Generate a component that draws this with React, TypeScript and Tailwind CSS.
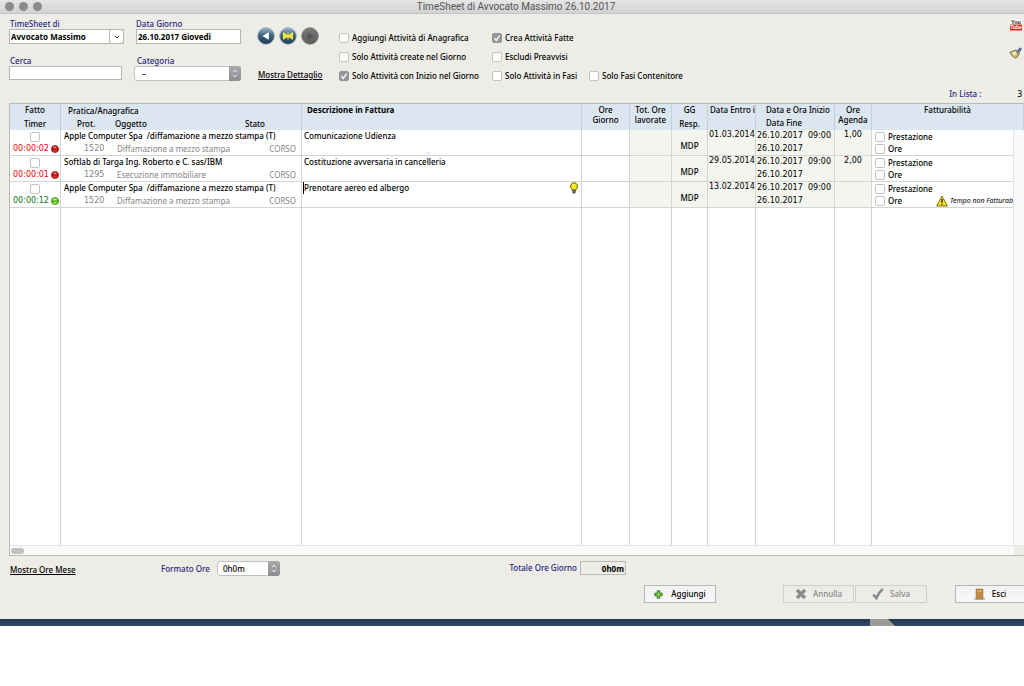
import { useState } from 'react';
import type { ReactNode } from 'react';

type Row = {
  timer: string;
  running: boolean;
  practice: string;
  prot: string;
  subject: string;
  description: string;
  due: string;
  hours: string;
  tip?: boolean;
  warning?: string;
};

const rows: Row[] = [
  {
    timer: '00:00:02',
    running: false,
    practice: 'Apple Computer Spa  /diffamazione a mezzo stampa (T)',
    prot: '1520',
    subject: 'Diffamazione a mezzo stampa',
    description: 'Comunicazione Udienza',
    due: '01.03.2014',
    hours: '1,00',
  },
  {
    timer: '00:00:01',
    running: false,
    practice: 'Softlab di Targa Ing. Roberto e C. sas/IBM',
    prot: '1295',
    subject: 'Esecuzione immobiliare',
    description: 'Costituzione avversaria in cancelleria',
    due: '29.05.2014',
    hours: '2,00',
  },
  {
    timer: '00:00:12',
    running: true,
    practice: 'Apple Computer Spa  /diffamazione a mezzo stampa (T)',
    prot: '1520',
    subject: 'Diffamazione a mezzo stampa',
    description: 'Prenotare aereo ed albergo',
    due: '13.02.2014',
    hours: '',
    tip: true,
    warning: 'Tempo non Fatturab',
  },
];

function Tick({ label, checked = false, hideLabel = false }: { label: string; checked?: boolean; hideLabel?: boolean }) {
  const [on, setOn] = useState(checked);
  return (
    <label className="inline-flex items-center gap-[3px] whitespace-nowrap">
      <span className="grid size-[10px] shrink-0">
        <input
          type="checkbox"
          aria-label={hideLabel ? label : undefined}
          checked={on}
          onChange={(e) => setOn(e.target.checked)}
          className="col-start-1 row-start-1 size-[10px] appearance-none rounded-[2px] border border-[#c2c2c2] bg-white checked:border-[#929295] checked:bg-[#98989b]"
        />
        {on && (
          <svg viewBox="0 0 10 10" className="pointer-events-none col-start-1 row-start-1 size-[10px]" fill="none" stroke="#fff" strokeWidth="1.3">
            <path d="M2.4 5.3 4.3 7.4 7.6 2.6" />
          </svg>
        )}
      </span>
      {!hideLabel && <span>{label}</span>}
    </label>
  );
}

function Stepper() {
  return (
    <span className="pointer-events-none absolute inset-y-0 right-0 grid w-[12px] place-items-center rounded-r-[3px] bg-linear-to-b from-[#a9a9ad] to-[#8c8c91]">
      <svg viewBox="0 0 8 12" className="h-[11px] w-[8px]" fill="none" stroke="#fff" strokeWidth="1">
        <path d="M1.8 4.6 4 2.2l2.2 2.4M1.8 7.4 4 9.8l2.2-2.4" />
      </svg>
    </span>
  );
}

function NavButton({ label, kind }: { label: string; kind: 'prev' | 'today' | 'next' }) {
  const off = kind === 'next';
  return (
    <button type="button" aria-label={label} disabled={off}>
      <svg viewBox="0 0 18 18" className="size-[18px]">
        <defs>
          <linearGradient id={`ball-${kind}`} x1="0" y1="0" x2="0" y2="1">
            <stop offset="0" stopColor={off ? '#7c7c7c' : '#9fb9cf'} />
            <stop offset="0.45" stopColor={off ? '#6a6a6a' : '#3f6480'} />
            <stop offset="1" stopColor={off ? '#5c5c5c' : '#163a52'} />
          </linearGradient>
        </defs>
        <circle cx="9" cy="9" r="8.3" fill={`url(#ball-${kind})`} stroke={off ? '#777' : '#8fa3b3'} strokeWidth="0.8" />
        {kind === 'prev' && <path d="M11.8 5.2v7.6L5.4 9z" fill="#fff" />}
        {kind === 'today' && (
          <path d="M4 5.4h1L8.400 8V5.400h1.200V8L13 5.400h1v7.200h-1L9.600 10v2.600H8.400V10L5 12.600H4z" fill="#f3e53c" />
        )}
        {kind === 'next' && <path d="M6.8 5.4v7.2l5.600-3.600z" fill="#525252" />}
      </svg>
    </button>
  );
}

function YouTubeIcon() {
  return (
    <svg viewBox="0 0 12 12" className="h-[12px] w-[12px]">
      <rect x="0.5" width="11" height="5.5" fill="#fff" />
      <text x="6" y="4.8" textAnchor="middle" fontSize="5.5" fontWeight="bold" fontFamily="Liberation Sans, sans-serif" fill="#222">
        You
      </text>
      <rect y="5.5" width="12" height="6" rx="0.6" fill="#d9281e" />
      <text x="6" y="10.4" textAnchor="middle" fontSize="5" fontWeight="bold" fontFamily="Liberation Sans, sans-serif" fill="#fff">
        Tube
      </text>
    </svg>
  );
}

function BroomIcon() {
  return (
    <svg viewBox="0 0 13 12" className="h-[12px] w-[13px]">
      <path d="M8.2 4.4 10.6 1l1.6.2-.2 1.7-2.4 3z" fill="#5a66a0" stroke="#3f4674" strokeWidth="0.6" />
      <path d="M1 5.2 7.3 3l3 3.2-1.5 3.4-2.8 1.6C3.8 9.8 2.2 8 1 5.2z" fill="#d3bd62" stroke="#5d5a48" strokeWidth="0.8" />
      <path d="M3 5.6 6.8 4.6 7.6 6.4 5.5 8.6z" fill="#f7efb8" />
      <path d="M7.3 3l3 3.2-.7 1.5L6.2 3.500z" fill="#7b7c82" />
    </svg>
  );
}

function BulbIcon() {
  return (
    <svg viewBox="0 0 10 12" className="h-[12px] w-[10px] shrink-0" aria-hidden="true">
      <circle cx="5" cy="4.5" r="4.6" fill="#fdf7a0" />
      <path d="M5 .8a3.4 3.4 0 0 1 2.200 6L6.600 8H3.400l-.6-1.200A3.400 3.400 0 0 1 5 .8z" fill="#fbee15" stroke="#3c3a10" strokeWidth="0.8" />
      <path d="M3.600 8.200h2.800v2L5.700 11.300H4.300l-.7-1.100z" fill="#777" stroke="#333" strokeWidth="0.6" />
      <path d="M3.600 2.600h1.400v2H3.600z" fill="#fffbc0" />
    </svg>
  );
}

function WarningIcon() {
  return (
    <svg viewBox="0 0 12 12" className="size-[12px] shrink-0" aria-hidden="true">
      <path d="M6 1 11.300 11H.7z" fill="#fce51d" stroke="#6e6108" strokeWidth="0.9" strokeLinejoin="round" />
      <path d="M6 4v3.800M6 8.700v1.300" stroke="#111" strokeWidth="1.3" />
    </svg>
  );
}

function Lamp({ on }: { on: boolean }) {
  return (
    <svg viewBox="0 0 8 8" className="size-[8px] shrink-0" aria-hidden="true">
      <circle cx="4" cy="4" r="3.600" fill={on ? '#58b414' : '#c01010'} stroke={on ? '#3d7a10' : '#7e1010'} strokeWidth="0.6" />
      <ellipse cx="4" cy="2.400" rx="1.800" ry="0.900" fill={on ? '#d5f5a8' : '#e88080'} />
      <ellipse cx="4" cy="5.800" rx="2" ry="1" fill={on ? '#9be83a' : '#ea2a2a'} />
    </svg>
  );
}

function FootButton({ children, disabled = false, className = '' }: { children: ReactNode; disabled?: boolean; className?: string }) {
  return (
    <button
      type="button"
      disabled={disabled}
      className={`flex h-[18px] items-center justify-center border border-[#b4b8bb] bg-linear-to-b from-[#f1f1f2] to-[#f8f8f8] font-medium disabled:border-[#cfcfcb] disabled:from-[#ebeae6] disabled:to-[#efeeea] disabled:text-[#888] ${className}`}
    >
      {children}
    </button>
  );
}

const th = 'h-[26px] border-r border-[#c6ced6] p-0 align-top font-medium';
const td = 'h-[26px] border-r border-b border-[#d4d4d4] p-0 align-top';
const tinted = 'bg-[#f4f5ef]';
const digits = "font-['DejaVu_Sans',sans-serif]";

export default function App() {
  return (
    <div className="min-h-screen overflow-x-hidden bg-white font-['Noto_Sans','Open_Sans',sans-serif] text-[8px] leading-[12px] text-black">
      <header className="flex h-[14px] items-center border-b border-[#c4c4c4] bg-linear-to-b from-[#e6e6e6] to-[#d2d2d2] px-[5px]">
        <div className="flex flex-1 gap-[5px]">
          <span className="size-[9px] rounded-full bg-[#8b8b8b]" />
          <span className="size-[9px] rounded-full bg-[#8b8b8b]" />
          <span className="size-[9px] rounded-full bg-[#8b8b8b]" />
        </div>
        <h1 className="pl-[8px] font-['Roboto',sans-serif] text-[10px] font-normal text-[#555]">TimeSheet di Avvocato Massimo 26.10.2017</h1>
        <div className="flex-1" />
      </header>

      <main className="bg-[#edece6] pb-[16px]">
        <section className="flex h-[89px] items-start pl-[9px]">
          <div className="grid grid-cols-[115px_107px] gap-x-[10px] gap-y-[12px] pt-[5px]">
            <div>
              <label htmlFor="owner" className="block pl-px leading-[10px] font-medium text-[#26267f]">TimeSheet di</label>
              <div className="relative">
                <select id="owner" className="block h-[15px] w-full appearance-none border border-[#b5b5b5] bg-white pl-px font-bold">
                  <option>Avvocato Massimo</option>
                </select>
                <span className="pointer-events-none absolute inset-y-0 right-0 grid w-[15px] place-items-center rounded-[3px] border border-[#b5b5b5] bg-white">
                  <svg viewBox="0 0 8 6" className="h-[6px] w-[8px]" fill="none" stroke="#333" strokeWidth="1">
                    <path d="M1.800 1.800 4 4l2.200-2.200" />
                  </svg>
                </span>
              </div>
            </div>
            <div className="pl-[2px]">
              <label htmlFor="day" className="block leading-[10px] font-medium text-[#26267f]">Data Giorno</label>
              <input id="day" defaultValue="26.10.2017 Giovedì" className="block h-[15px] w-full border border-[#b5b5b5] bg-white px-px font-bold" />
            </div>
            <div className="pr-[2px]">
              <label htmlFor="search" className="block pl-px leading-[10px] font-medium text-[#26267f]">Cerca</label>
              <input id="search" className="block h-[14px] w-full border border-[#b5b5b5] bg-white px-px" />
            </div>
            <div>
              <label htmlFor="category" className="block pl-[3px] leading-[10px] font-medium text-[#26267f]">Categoria</label>
              <div className="relative">
                <select id="category" className="block h-[15px] w-full appearance-none rounded-[3px] border border-[#c2c2c2] bg-white pl-[7px]">
                  <option>–</option>
                </select>
                <Stepper />
              </div>
            </div>
          </div>

          <div className="ml-[16px] flex w-[67px] flex-col pt-[13px]">
            <div className="flex gap-[4px]">
              <NavButton label="Giorno precedente" kind="prev" />
              <NavButton label="Oggi" kind="today" />
              <NavButton label="Giorno successivo" kind="next" />
            </div>
            <a href="#dettaglio" className="mt-[24px] pl-px font-medium whitespace-nowrap underline">Mostra Dettaglio</a>
          </div>

          <div className="ml-[15px] grid grid-cols-[153px_97px_auto] gap-y-[7px] pt-[18px] font-medium">
            <Tick label="Aggiungi Attività di Anagrafica" />
            <Tick label="Crea Attività Fatte" checked />
            <span />
            <Tick label="Solo Attività create nel Giorno" />
            <Tick label="Escludi Preavvisi" />
            <span />
            <Tick label="Solo Attività con Inizio nel Giorno" checked />
            <Tick label="Solo Attività in Fasi" />
            <Tick label="Solo Fasi Contenitore" />
          </div>

          <div className="ml-auto flex flex-col items-end pt-[5px] pr-[2px]">
            <button type="button" aria-label="YouTube"><YouTubeIcon /></button>
            <button type="button" aria-label="Pulisci" className="mt-[16px]"><BroomIcon /></button>
            <p className="mt-[29px] flex gap-[36px] font-medium text-[#26267f]">
              In Lista : <span className="text-black">3</span>
            </p>
          </div>
        </section>

        <section className="ml-[9px] border-y border-l border-[#b9b9b9] bg-white">
          <table className="w-full table-fixed border-separate border-spacing-0">
            <colgroup>
              <col className="w-[51px]" />
              <col className="w-[241px]" />
              <col />
              <col className="w-[48px]" />
              <col className="w-[42px]" />
              <col className="w-[36px]" />
              <col className="w-[48px]" />
              <col className="w-[79px]" />
              <col className="w-[37px]" />
              <col className="w-[142px]" />
              <col className="w-[10px]" />
            </colgroup>
            <thead className="bg-[#dce6f0]">
              <tr>
                <th className={th}>
                  <div>Fatto</div>
                  <div className="pt-[2px]">Timer</div>
                </th>
                <th className={th}>
                  <div className="pt-px pl-[7px] text-left">Pratica/Anagrafica</div>
                  <div className="grid grid-cols-[38px_130px_auto] pt-px pl-[16px] text-left">
                    <span>Prot.</span>
                    <span>Oggetto</span>
                    <span>Stato</span>
                  </div>
                </th>
                <th className={`${th} text-left`}>
                  <div className="pl-[5px] font-bold">Descrizione in Fattura</div>
                </th>
                <th className={th}><div className="pt-px leading-[10px]">Ore<br />Giorno</div></th>
                <th className={th}><div className="pt-px leading-[10px]">Tot. Ore<br />lavorate</div></th>
                <th className={th}>
                  <div>GG</div>
                  <div className="pt-[2px]">Resp.</div>
                </th>
                <th className={th}><div className="overflow-hidden pl-[2px] text-left whitespace-nowrap">Data Entro il</div></th>
                <th className={`${th} text-left`}>
                  <div className="pl-[10px] whitespace-nowrap">Data e Ora Inizio</div>
                  <div className="pt-px pl-[10px]">Data Fine</div>
                </th>
                <th className={th}><div className="pt-px leading-[10px]">Ore<br />Agenda</div></th>
                <th colSpan={2} className={th}>Fatturabilità</th>
              </tr>
            </thead>
            <tbody>
              {rows.map((r, i) => (
                <tr key={i}>
                  <td className={td}>
                    <div className="flex h-[13px] items-center justify-center">
                      <Tick label={`Fatto ${i + 1}`} hideLabel />
                    </div>
                    <div className={`flex h-[11px] items-center justify-between pr-px pl-[3px] leading-[11px] ${digits} ${r.running ? 'text-[#0b7a24]' : 'text-[#f4000c]'}`}>
                      {r.timer}
                      <Lamp on={r.running} />
                    </div>
                  </td>
                  <td className={td}>
                    <div className="pl-[3px] font-medium whitespace-pre">{r.practice}</div>
                    <div className="flex pt-px pr-[5px] pl-[23px] text-[#858585]">
                      <span className={`w-[33px] ${digits}`}>{r.prot}</span>
                      <span>{r.subject}</span>
                      <span className="ml-auto">CORSO</span>
                    </div>
                  </td>
                  <td className={td}>
                    <div className="flex items-center justify-between pr-[2px] pl-px font-medium">
                      <span className={r.tip ? 'border-l border-black' : 'pl-px'}>{r.description}</span>
                      {r.tip && <BulbIcon />}
                    </div>
                  </td>
                  <td className={td} />
                  <td className={`${td} ${tinted}`} />
                  <td className={`${td} ${tinted}`}><div className="pt-[10px] text-center font-medium">MDP</div></td>
                  <td className={`${td} ${tinted}`}><div className={`pl-px leading-[10px] whitespace-nowrap ${digits}`}>{r.due}</div></td>
                  <td className={`${td} ${tinted}`}>
                    <div className={`grid grid-cols-[51px_auto] gap-y-px pl-px ${digits}`}>
                      <span>26.10.2017</span>
                      <span>09:00</span>
                      <span>26.10.2017</span>
                    </div>
                  </td>
                  <td className={`${td} ${tinted}`}><div className={`text-center leading-[10px] ${digits}`}>{r.hours}</div></td>
                  <td className={`${td} border-r-[#e4e4e4]`}>
                    <div className="flex h-[12px] items-center pt-px pl-[3px] font-medium"><Tick label="Prestazione" /></div>
                    <div className="flex h-[13px] items-center pt-px pl-[3px] font-medium">
                      <Tick label="Ore" />
                      {r.warning && (
                        <span className="ml-auto flex items-center gap-[2px] text-[7px] font-normal whitespace-nowrap italic">
                          <WarningIcon />
                          {r.warning}
                        </span>
                      )}
                    </div>
                  </td>
                  <td className="bg-[#fafafa] p-0" />
                </tr>
              ))}
              <tr aria-hidden="true">
                {[0, 1, 2, 3, 4, 5, 6, 7, 8].map((c) => (
                  <td key={c} className="h-[337px] border-r border-[#d4d4d4] p-0" />
                ))}
                <td className="border-r border-[#e4e4e4] p-0" />
                <td className="bg-[#fafafa] p-0" />
              </tr>
            </tbody>
          </table>
          <div className="flex h-[10px] items-center border-t border-[#e4e4e4] bg-[#fafafa] pl-px">
            <span className="h-[6px] w-[13px] rounded-full bg-[#c1c1c1]" />
            <span className="ml-auto h-full w-[10px] bg-[#edece6]" />
          </div>
        </section>

        <section className="flex items-start pt-[5px] pl-[9px]">
          <a href="#ore-mese" className="mt-[3px] w-[152px] pl-px font-medium underline">Mostra Ore Mese</a>
          <label htmlFor="format" className="mt-[2px] w-[56px] font-medium text-[#26267f]">Formato Ore</label>
          <div className="relative w-[63px]">
            <select id="format" className="block h-[15px] w-full appearance-none rounded-[3px] border border-[#c2c2c2] bg-white pl-[5px] font-medium">
              <option>0h0m</option>
            </select>
            <Stepper />
          </div>
          <div className="ml-auto flex items-center gap-[3px] pr-[398px]">
            <label htmlFor="total" className="font-medium text-[#26267f]">Totale Ore Giorno</label>
            <input id="total" readOnly value="0h0m" className="h-[14px] w-[46px] border border-[#b9b9b9] bg-transparent px-px text-right font-bold" />
          </div>
        </section>

        <section className="mt-[9px] flex justify-end">
          <FootButton className="w-[72px] gap-[8px]">
            <svg viewBox="0 0 9 9" className="size-[9px]">
              <path d="M3.2.8h2.600v2.400h2.400v2.600H5.800v2.400H3.200V5.800H.8V3.200h2.400z" fill="#6fd03f" stroke="#3d6b28" strokeWidth="0.9" />
            </svg>
            Aggiungi
          </FootButton>
          <FootButton disabled className="ml-[67px] w-[71px] gap-[6px]">
            <svg viewBox="0 0 12 12" className="size-[12px]">
              <path d="M2 2 10 10M10 2 2 10" stroke="#8b8b8b" strokeWidth="3.4" />
            </svg>
            Annulla
          </FootButton>
          <FootButton disabled className="ml-px w-[72px] gap-[6px]">
            <svg viewBox="0 0 12 12" className="size-[12px]" fill="none">
              <path d="M1.2 6.600 4.400 10C5.800 6.500 7.800 3.600 10.800 1" stroke="#8b8b8b" strokeWidth="2.700" />
            </svg>
            Salva
          </FootButton>
          <FootButton className="ml-[28px] w-[69px] gap-[7px] border-r-0">
            <svg viewBox="0 0 11 12" className="h-[12px] w-[11px]">
              <path d="M0 11h11" stroke="#8a8a8a" strokeWidth="1" />
              <path d="M2 1h7v10H2z" fill="#c28a4a" stroke="#9a6a34" strokeWidth="0.5" />
              <path d="M3 2h5v2H3z" fill="#d6a667" />
            </svg>
            Esci
          </FootButton>
        </section>
      </main>

      <footer className="flex h-[7px] justify-end bg-linear-to-b from-[#22374f] to-[#2f4a68]">
        <svg viewBox="0 0 25 7" className="mr-[129px] h-[7px] w-[25px]" aria-hidden="true">
          <path d="M0 0h18l7 7H0z" fill="#9b9998" />
        </svg>
      </footer>
    </div>
  );
}
